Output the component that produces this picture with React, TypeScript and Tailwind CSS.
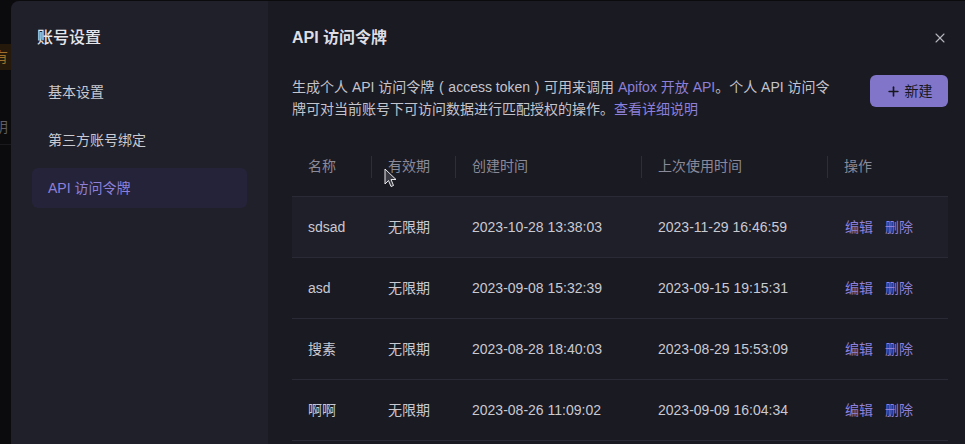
import { Plus, X } from "lucide-react";

const rows = [
  { name: "sdsad", exp: "无限期", created: "2023-10-28 13:38:03", used: "2023-11-29 16:46:59" },
  { name: "asd", exp: "无限期", created: "2023-09-08 15:32:39", used: "2023-09-15 19:15:31" },
  { name: "搜素", exp: "无限期", created: "2023-08-28 18:40:03", used: "2023-08-29 15:53:09" },
  { name: "啊啊", exp: "无限期", created: "2023-08-26 11:09:02", used: "2023-09-09 16:04:34" },
];

const cols = ["w-[80px]", "w-[84px]", "w-[186px]", "w-[186px]", "flex-1"];

export default function App() {
  return (
    <div
      className="relative h-[444px] w-[965px] overflow-hidden bg-[#0b0b0e]"
      style={{ fontFamily: '"Liberation Sans", "Noto Sans CJK SC", sans-serif' }}
    >
      {/* page behind the modal */}
      <div className="pt-[44px]">
        <div className="-ml-[6px] h-[26px] bg-[#24190a] text-[14px] leading-[26px] text-[#a0702a]">有</div>
        <div className="-ml-[6px] mt-[39px] h-[36px] border-b border-[#1a1a1e] text-[14px] leading-[36px] text-[#5e5e64]">阴</div>
      </div>

      {/* modal */}
      <div className="absolute left-[11px] top-[1px] flex h-[460px] w-[980px] overflow-hidden rounded-tl-[8px]">
        <aside className="w-[257px] shrink-0 bg-[#20202a] px-[21px] pt-[26px]">
          <h2 className="pl-[5px] text-[16px] leading-[22px] font-medium text-[#e6e6ea]">账号设置</h2>
          <nav className="mt-[23px] space-y-[8px]">
            <div className="h-[40px] rounded-[6px] px-[16px] text-[14px] leading-[40px] text-[#c9c9d1]">基本设置</div>
            <div className="h-[40px] rounded-[6px] px-[16px] text-[14px] leading-[40px] text-[#c9c9d1]">第三方账号绑定</div>
            <div className="h-[40px] rounded-[6px] bg-[#24233a] px-[16px] text-[14px] leading-[40px] text-[#8d80da]">API 访问令牌</div>
          </nav>
        </aside>

        <main className="flex-1 bg-[#1a1a23] pl-[24px] pr-[33px] pt-[26px]">
          <div className="flex w-[656px] items-center justify-between">
            <h1 className="text-[16px] leading-[22px] font-semibold text-[#dedee4]">API 访问令牌</h1>
            <X size={16} strokeWidth={1.6} className="text-[#b4b4bc]" />
          </div>

          <div className="mt-[27px] flex w-[656px] items-start justify-between">
            <p className="w-[545px] text-[14px] leading-[22px] text-[#c4c4cc]">
              生成个人 API 访问令牌<span className="inline-block w-[14px] text-center">(</span>access token<span className="inline-block w-[14px] text-center">)</span>可用来调用 <span className="text-[#8d80da]">Apifox 开放 API</span>。个人 API 访问令牌可对当前账号下可访问数据进行匹配授权的操作。<span className="text-[#8d80da]">查看详细说明</span>
            </p>
            <button className="mt-[-1px] flex h-[32px] w-[78px] items-center justify-center gap-[4px] rounded-[6px] bg-[#8075c9] text-[14px] text-[#16161d]">
              <Plus size={15} strokeWidth={2.6} className="text-[#16161d]" />
              <span className="text-[#16161d]">新建</span>
            </button>
          </div>

          <div className="mt-[22px] w-[656px] text-[14px]">
            <div className="flex h-[55px] items-center border-b border-[#2a2a36] pb-[5px] text-[#8a8a98]">
              {["名称", "有效期", "创建时间", "上次使用时间", "操作"].map((h, i) => (
                <div key={h} className={`${cols[i]} relative flex items-center px-[16px]`}>
                  {h}
                  {i < 4 && <span className="absolute right-0 top-1/2 h-[22px] w-px -translate-y-1/2 bg-[#2e2e3a]" />}
                </div>
              ))}
            </div>
            {rows.map((r, i) => (
              <div
                key={r.name}
                className={`flex h-[61px] items-center border-b border-[#2a2a36] text-[#c9c9d1] ${i === 0 ? "bg-[#1f1f29]" : ""}`}
              >
                <div className={`${cols[0]} px-[16px]`}>{r.name}</div>
                <div className={`${cols[1]} px-[16px]`}>{r.exp}</div>
                <div className={`${cols[2]} px-[16px]`}>{r.created}</div>
                <div className={`${cols[3]} px-[16px]`}>{r.used}</div>
                <div className={`${cols[4]} flex gap-[12px] px-[17px] text-[#8d80da]`}>
                  <span>编辑</span>
                  <span>删除</span>
                </div>
              </div>
            ))}
          </div>
        </main>
      </div>

      {/* mouse pointer */}
      <svg className="absolute left-[384px] top-[168px]" width="13" height="20" viewBox="0 0 13 20">
        <path d="M1 1 L1 16 L4.5 12.5 L7 18.5 L9.5 17.5 L7 11.5 L12 11.5 Z" fill="#3a3a42" stroke="#e8e8ec" strokeWidth="1" />
      </svg>
    </div>
  );
}
